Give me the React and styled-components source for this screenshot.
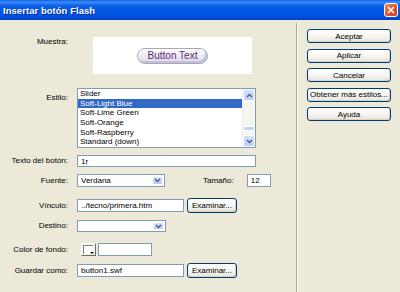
import React from "react";
import styled, { createGlobalStyle } from "styled-components";

const GlobalStyle = createGlobalStyle`
  html, body {
    margin: 0;
    padding: 0;
    background: #ece9d8;
  }
  body {
    font-family: "Liberation Sans", Arial, sans-serif;
    font-size: 8px;
    color: #000;
  }
`;

const Window = styled.div`
  width: 400px;
  height: 292px;
  display: flex;
  flex-direction: column;
  overflow: hidden;
  background: #ece9d8;
`;

const TitleBar = styled.div`
  height: 20px;
  flex-shrink: 0;
  display: flex;
  align-items: center;
  justify-content: space-between;
  padding: 0 2px 0 3px;
  box-sizing: border-box;
  background: linear-gradient(
    #0a5fe8 0%,
    #3d8ef5 10%,
    #0f61ec 28%,
    #0055e5 55%,
    #0050de 85%,
    #0040c4 100%
  );
`;

const Title = styled.span`
  color: #fff;
  font-weight: bold;
  font-size: 9.4px;
  letter-spacing: 0.1px;
  text-shadow: 1px 1px 0 #0a2a9a;
`;

const CloseButton = styled.div`
  width: 14px;
  height: 14px;
  box-sizing: border-box;
  border: 1px solid #fff;
  border-radius: 3px;
  background: linear-gradient(135deg, #f0896a 0%, #e35a2e 45%, #c9411b 100%);
  display: flex;
  align-items: center;
  justify-content: center;
`;

const Body = styled.div`
  flex: 1;
  display: flex;
`;

const Form = styled.div`
  width: 296px;
  flex-shrink: 0;
  padding-top: 17px;
  box-sizing: border-box;
`;

const Divider = styled.div`
  width: 1px;
  margin-top: 3px;
  background: #aca899;
  box-shadow: 1px 0 0 #fff;
`;

const Actions = styled.div`
  display: flex;
  flex-direction: column;
  gap: 5.5px;
  padding: 9px 0 0 10px;
`;

const Row = styled.div`
  display: flex;
  align-items: ${(p) => (p.$top ? "flex-start" : "center")};
  margin-top: ${(p) => p.$mt || 0}px;
`;

const Label = styled.div`
  width: 68px;
  flex-shrink: 0;
  text-align: right;
  margin-right: 9px;
  line-height: 10px;
  padding-top: ${(p) => p.$pt || 0}px;
  white-space: nowrap;
`;

const SideLabel = styled.div`
  margin-left: ${(p) => p.$ml || 0}px;
  line-height: 10px;
  white-space: nowrap;
`;

const Preview = styled.div`
  width: 159px;
  height: 37px;
  margin-left: 16px;
  background: #fff;
  display: flex;
  align-items: center;
  justify-content: center;
`;

const Pill = styled.div`
  width: 71px;
  height: 16px;
  box-sizing: border-box;
  border-radius: 8px;
  border: 1px solid #a9a6b8;
  background: linear-gradient(#ffffff 0%, #eeedf6 45%, #d9d6ea 100%);
  box-shadow: inset -2px -2px 0 #c4c1d6, inset 1px 1px 0 #fff;
  display: flex;
  align-items: center;
  justify-content: center;
  color: #5b2c72;
  font-size: 10px;
  padding-bottom: 1px;
`;

const ListBox = styled.div`
  width: 179px;
  height: 60px;
  box-sizing: border-box;
  border: 1px solid #7f9db9;
  background: #fff;
  display: flex;
`;

const Items = styled.div`
  flex: 1;
  overflow: hidden;
`;

const Item = styled.div`
  height: 9.7px;
  line-height: 9.7px;
  padding-left: 2px;
  white-space: nowrap;
  background: ${(p) => (p.$selected ? "#316ac5" : "transparent")};
  color: ${(p) => (p.$selected ? "#fff" : "#000")};
`;

const ScrollBar = styled.div`
  width: 12px;
  display: flex;
  flex-direction: column;
  background: #f6f5ee;
  border-left: 1px solid #eeede5;
`;

const ScrollButton = styled.div`
  height: 12px;
  box-sizing: border-box;
  border: 1px solid #fff;
  border-radius: 2px;
  background: linear-gradient(#d4e0fc, #bccdf6);
  display: flex;
  align-items: center;
  justify-content: center;
`;

const Spacer = styled.div`
  flex: 1;
`;

const Thumb = styled.div`
  height: 5px;
  margin-bottom: 4px;
  box-sizing: border-box;
  border: 1px solid #fff;
  border-radius: 2px;
  background: #c1d2f8;
`;

const Input = styled.div`
  width: ${(p) => p.$w}px;
  height: ${(p) => p.$h || 12}px;
  margin-left: ${(p) => p.$ml || 0}px;
  box-sizing: border-box;
  border: 1px solid #7f9db9;
  background: #fff;
  padding: 0 3px;
  display: flex;
  align-items: center;
  white-space: nowrap;
`;

const Select = styled(Input)`
  padding-right: 1px;
  justify-content: space-between;
`;

const DropArrow = styled.div`
  width: 11px;
  height: calc(100% - 2px);
  box-sizing: border-box;
  border: 1px solid #fff;
  border-radius: 2px;
  background: linear-gradient(#d4e0fc, #b9cbf6);
  display: flex;
  align-items: center;
  justify-content: center;
`;

const XPButton = styled.div`
  width: ${(p) => p.$w}px;
  height: ${(p) => p.$h}px;
  margin-left: ${(p) => p.$ml || 0}px;
  box-sizing: border-box;
  border: 1px solid #003c74;
  border-radius: 3px;
  background: linear-gradient(#ffffff 0%, #f5f4f0 55%, #e6e3d9 100%);
  box-shadow: inset -1px -1px 0 #d8d2c2;
  display: flex;
  align-items: center;
  justify-content: center;
  white-space: nowrap;
`;

const Swatch = styled.div`
  width: 15px;
  height: 13px;
  margin-left: 4px;
  box-sizing: border-box;
  border: 1px solid #fff;
  border-right-color: #716f64;
  border-bottom-color: #716f64;
  background: #f1efe6;
  padding: 1px;
  position: relative;
`;

const SwatchFill = styled.div`
  width: 9px;
  height: 8px;
  border-top: 1px solid #808080;
  border-left: 1px solid #808080;
  background: #fff;
`;

const SwatchArrow = styled.div`
  position: absolute;
  right: 1px;
  bottom: 1px;
  width: 0;
  height: 0;
  border-left: 2px solid transparent;
  border-right: 2px solid transparent;
  border-top: 2px solid #000;
`;

const Chevron = ({ up }) => (
  <svg width="7" height="5" viewBox="0 0 7 5">
    <path
      d={up ? "M1 4 L3.5 1.5 L6 4" : "M1 1 L3.5 3.5 L6 1"}
      fill="none"
      stroke="#4d6185"
      strokeWidth="1.5"
    />
  </svg>
);

const styles = [
  "Slider",
  "Soft-Light Blue",
  "Soft-Lime Green",
  "Soft-Orange",
  "Soft-Raspberry",
  "Standard (down)",
];

const buttons = [
  "Aceptar",
  "Aplicar",
  "Cancelar",
  "Obtener más estilos...",
  "Ayuda",
];

export default function App() {
  return (
    <>
      <GlobalStyle />
      <Window>
        <TitleBar>
          <Title>Insertar botón Flash</Title>
          <CloseButton>
            <svg width="8" height="8" viewBox="0 0 8 8">
              <path d="M1 1 L7 7 M7 1 L1 7" stroke="#fff" strokeWidth="1.6" />
            </svg>
          </CloseButton>
        </TitleBar>
        <Body>
          <Form>
            <Row $top>
              <Label $pt={0}>Muestra:</Label>
              <Preview>
                <Pill>Button Text</Pill>
              </Preview>
            </Row>
            <Row $top $mt={14}>
              <Label $pt={5}>Estilo:</Label>
              <ListBox>
                <Items>
                  {styles.map((s, i) => (
                    <Item key={s} $selected={i === 1}>
                      {s}
                    </Item>
                  ))}
                </Items>
                <ScrollBar>
                  <ScrollButton>
                    <Chevron up />
                  </ScrollButton>
                  <Spacer />
                  <Thumb />
                  <ScrollButton>
                    <Chevron />
                  </ScrollButton>
                </ScrollBar>
              </ListBox>
            </Row>
            <Row $mt={7}>
              <Label>Texto del botón:</Label>
              <Input $w={179}>1r</Input>
            </Row>
            <Row $mt={7}>
              <Label>Fuente:</Label>
              <Select $w={88} $h={13}>
                Verdana
                <DropArrow>
                  <Chevron />
                </DropArrow>
              </Select>
              <SideLabel $ml={38}>Tamaño:</SideLabel>
              <Input $w={24} $h={13} $ml={13}>
                12
              </Input>
            </Row>
            <Row $mt={11}>
              <Label>Vínculo:</Label>
              <Input $w={107} $h={13}>
                ../tecno/primera.htm
              </Input>
              <XPButton $w={50} $h={15} $ml={3}>
                Examinar...
              </XPButton>
            </Row>
            <Row $mt={7}>
              <Label>Destino:</Label>
              <Select $w={89} $h={12}>
                <span />
                <DropArrow>
                  <Chevron />
                </DropArrow>
              </Select>
            </Row>
            <Row $mt={11}>
              <Label>Color de fondo:</Label>
              <Swatch>
                <SwatchFill />
                <SwatchArrow />
              </Swatch>
              <Input $w={54} $h={13} $ml={2} />
            </Row>
            <Row $mt={7}>
              <Label>Guardar como:</Label>
              <Input $w={107} $h={13}>
                button1.swf
              </Input>
              <XPButton $w={50} $h={15} $ml={3}>
                Examinar...
              </XPButton>
            </Row>
          </Form>
          <Divider />
          <Actions>
            {buttons.map((b) => (
              <XPButton key={b} $w={84} $h={14}>
                {b}
              </XPButton>
            ))}
          </Actions>
        </Body>
      </Window>
    </>
  );
}
